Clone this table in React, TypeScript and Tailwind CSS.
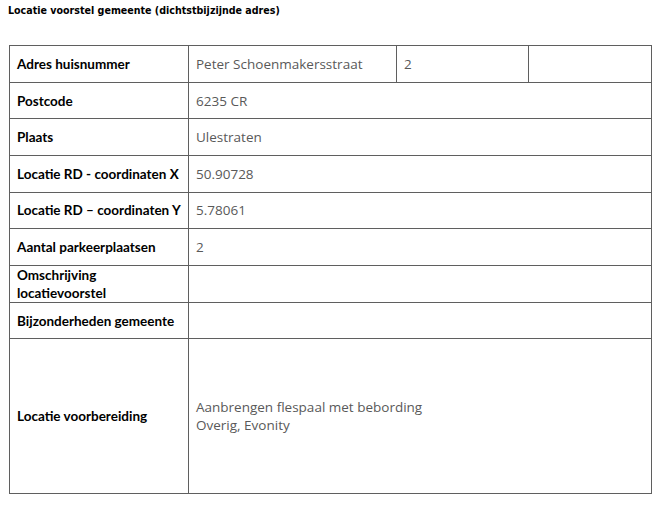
import React from "react";

const rows: { label: string; value?: string }[] = [
  { label: "Postcode", value: "6235 CR" },
  { label: "Plaats", value: "Ulestraten" },
  { label: "Locatie RD - coordinaten X", value: "50.90728" },
  { label: "Locatie RD – coordinaten Y", value: "5.78061" },
  { label: "Aantal parkeerplaatsen", value: "2" },
  { label: "Omschrijving locatievoorstel" },
  { label: "Bijzonderheden gemeente" },
];

const labelCls =
  "border border-[#5f5f5f] pl-[7px] pr-0 align-middle font-bold text-black text-[13.5px] leading-[18px] font-['Lato',sans-serif]";
const valueCls =
  "border border-[#5f5f5f] pl-[7px] align-middle text-[#595959] text-[13.5px] leading-[18px] font-['Open_Sans',sans-serif]";

export default function App() {
  return (
    <div className="w-[666px] h-[517px] bg-white">
      <div className="pt-[3px] pl-[8px] text-[10.6px] font-bold text-black font-['DejaVu_Sans_Condensed','DejaVu_Sans',sans-serif]">
        Locatie voorstel gemeente (dichtstbijzijnde adres)
      </div>
      <table className="mt-[26px] ml-[9px] w-[643px] border-collapse table-fixed">
        <colgroup>
          <col className="w-[179px]" />
          <col className="w-[208px]" />
          <col className="w-[132px]" />
          <col />
        </colgroup>
        <tbody>
          <tr className="h-[37px]">
            <td className={labelCls}>Adres huisnummer</td>
            <td className={valueCls}>Peter Schoenmakersstraat</td>
            <td className={valueCls}>2</td>
            <td className={valueCls}></td>
          </tr>
          {rows.map((r) => (
            <tr key={r.label} className="h-[36.6px]">
              <td className={labelCls}>{r.label}</td>
              <td className={valueCls} colSpan={3}>
                {r.value}
              </td>
            </tr>
          ))}
          <tr className="h-[155px]">
            <td className={labelCls}>Locatie voorbereiding</td>
            <td className={valueCls} colSpan={3}>
              <div>Aanbrengen flespaal met bebording</div>
              <div>Overig, Evonity</div>
            </td>
          </tr>
        </tbody>
      </table>
    </div>
  );
}
